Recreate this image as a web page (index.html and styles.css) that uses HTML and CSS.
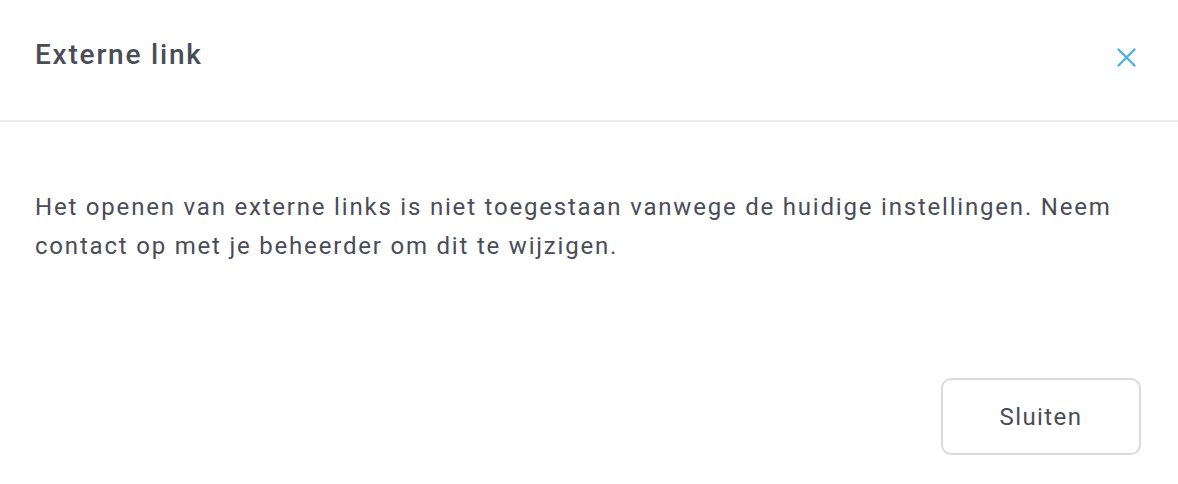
FILE: index.html
```html
<!DOCTYPE html>
<html lang="nl">
<head>
    <meta charset="UTF-8">
    <meta name="viewport" content="width=device-width, initial-scale=1.0">
    <title>Externe link</title>
    <link rel="stylesheet" href="styles.css">
</head>
<body>
    <div class="dialog">
        <div class="dialog-header">
            <h1 class="dialog-title">Externe link</h1>
            <button class="close-btn" aria-label="Sluiten">
                <svg width="19" height="19" viewBox="0 0 19 19">
                    <path d="M1.5 1.5 L17.5 17.5 M17.5 1.5 L1.5 17.5" stroke="#4fb0e6" stroke-width="2.4" stroke-linecap="round" fill="none"/>
                </svg>
            </button>
        </div>
        <div class="dialog-body">
            <p>Het openen van externe links is niet toegestaan vanwege de huidige instellingen. Neem contact op met je beheerder om dit te wijzigen.</p>
        </div>
        <div class="dialog-footer">
            <button class="btn">Sluiten</button>
        </div>
    </div>
</body>
</html>
```
FILE: styles.css
```css
body {
    margin: 0;
    background-color: #fff;
    font-family: Roboto, "Noto Sans", Arial, sans-serif;
    color: #494c59;
}
.dialog {
    display: flex;
    flex-direction: column;
    height: 484px;
}
.dialog-header {
    display: flex;
    justify-content: space-between;
    align-items: flex-start;
    height: 82px;
    padding: 38px 42px 0 35px;
    border-bottom: 2px solid #ececf0;
}
.dialog-title {
    margin: 0;
    font-size: 28px;
    font-weight: 500;
    line-height: 34px;
    letter-spacing: 1.8px;
    color: #494c59;
}
.close-btn {
    display: flex;
    align-items: center;
    justify-content: center;
    width: 19px;
    height: 34px;
    margin-top: 2px;
    padding: 0;
    border: none;
    background: none;
    cursor: pointer;
}
.dialog-body {
    padding: 66px 36px 0 35px;
}
.dialog-body p {
    margin: 0;
    font-size: 24px;
    line-height: 39px;
    letter-spacing: 1.8px;
}
.dialog-footer {
    display: flex;
    justify-content: flex-end;
    margin-top: auto;
    padding: 0 37px 29px 0;
}
.btn {
    width: 200px;
    height: 77px;
    border: 2px solid #dadada;
    border-radius: 10px;
    background-color: #fff;
    font-family: Roboto, "Noto Sans", Arial, sans-serif;
    font-size: 24px;
    letter-spacing: 1.4px;
    color: #494c59;
    cursor: pointer;
}
```
